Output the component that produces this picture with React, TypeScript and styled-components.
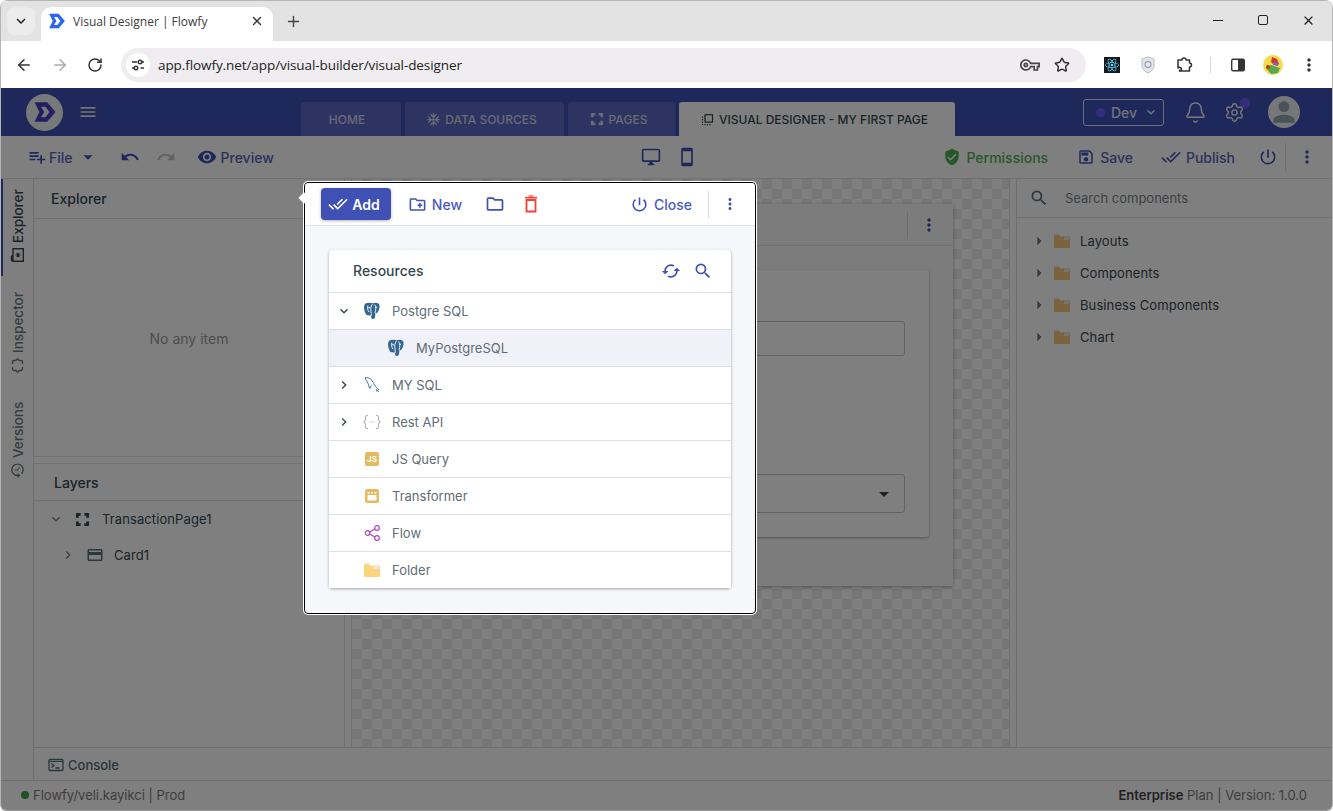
import React from 'react';
import styled, { createGlobalStyle } from 'styled-components';
import {
  MdAcUnit,
  MdAdd,
  MdArrowDropDown,
  MdArrowRight,
  MdCached,
  MdChevronRight,
  MdClose,
  MdCreditCard,
  MdDataObject,
  MdDoneAll,
  MdFlipToFront,
  MdHistory,
  MdKeyboardArrowDown,
  MdMenu,
  MdMoreVert,
  MdOutlineCreateNewFolder,
  MdOutlineDesktopWindows,
  MdOutlineFolder,
  MdOutlineSave,
  MdOutlineSmartphone,
  MdOutlineVpnKey,
  MdPerson,
  MdPlaylistAdd,
  MdPowerSettingsNew,
  MdRedo,
  MdSearch,
  MdUndo,
  MdVerifiedUser,
  MdVisibility,
} from 'react-icons/md';
import { SiReact } from 'react-icons/si';
import { ArrowLeft, ArrowRight, Bell, Plus, RotateCw, Settings, Star, X } from 'lucide-react';

const INDIGO = '#3f51b5';
const SLATE = '#37474f';
const VIOLET = '#6a5cff';

const GlobalStyle = createGlobalStyle`
  html, body { margin: 0; padding: 0; background: #fff; }
  * { box-sizing: border-box; }
  body { font-family: Inter, "Liberation Sans", sans-serif; color: ${SLATE}; }
`;

const Page = styled.div`
  position: relative;
  width: 1333px;
  height: 811px;
  overflow: hidden;
  display: flex;
  flex-direction: column;
  border-left: 1px solid #b5b5b5;
  border-right: 1px solid #b5b5b5;
  border-bottom: 1px solid #9a9a9a;
  border-radius: 8px 8px 6px 6px;
`;

const IconSlot = styled.span<{ $ml?: number; $mr?: number }>`
  display: flex;
  flex: none;
  margin-left: ${(p) => p.$ml ?? 0}px;
  margin-right: ${(p) => p.$mr ?? 0}px;
`;

/* browser chrome */
const TabStrip = styled.div`
  height: 41px;
  flex: none;
  background: #e3e3e3;
  border-top: 1px solid #b5b5b5;
  display: flex;
  align-items: flex-end;
  padding-left: 6px;
`;

const TabSearch = styled.div`
  width: 28px;
  height: 28px;
  margin-bottom: 6px;
  border-radius: 8px;
  background: #ececec;
  color: #222;
  display: flex;
  align-items: center;
  justify-content: center;
`;

const BrowserTab = styled.div`
  width: 232px;
  height: 34px;
  margin-left: 6px;
  background: #fff;
  border-radius: 10px 10px 0 0;
  display: flex;
  align-items: center;
  padding: 0 9px 6px 7px;
  font: 12px "Open Sans", "Noto Sans", sans-serif;
  color: #3c3c3c;
  gap: 7px;
  span { flex: 1; }
`;

const NewTab = styled.div`
  margin: 0 0 11px 12px;
  color: #444;
  display: flex;
`;

const WindowButtons = styled.div`
  margin: 0 0 2px auto;
  align-self: center;
  display: flex;
  gap: 35px;
  padding-right: 16px;
  color: #222;
  align-items: center;
`;

const MinLine = styled.div`
  width: 10px;
  height: 1px;
  background: #222;
`;

const MaxBox = styled.div`
  width: 10px;
  height: 10px;
  border: 1px solid #222;
  border-radius: 2px;
`;

const BrowserBar = styled.div`
  height: 47px;
  flex: none;
  background: #fff;
  display: flex;
  align-items: center;
  padding-left: 14px;
  color: #444;
`;

const NavIcons = styled.div`
  display: flex;
  gap: 18px;
  align-items: center;
  margin-right: 18px;
`;

const Omnibox = styled.div`
  width: 965px;
  height: 34px;
  border-radius: 17px;
  background: #efedef;
  display: flex;
  align-items: center;
  padding: 0 16px 0 5px;
  font: 13.5px "Open Sans", "Noto Sans", sans-serif;
  letter-spacing: -0.08px;
  color: #222;
`;

const SiteInfo = styled.div`
  width: 24px;
  height: 24px;
  border-radius: 12px;
  background: #fff;
  display: flex;
  align-items: center;
  justify-content: center;
  margin-right: 8px;
`;

const OmniIcons = styled.div`
  margin-left: auto;
  display: flex;
  gap: 14px;
  align-items: center;
  color: #444;
`;

const ExtensionIcons = styled.div`
  display: flex;
  align-items: center;
  margin-left: 18px;
`;

const ReactBadge = styled.div`
  width: 16px;
  height: 16px;
  background: #16181d;
  color: #61dafb;
  display: flex;
  align-items: center;
  justify-content: center;
`;

const ToolbarRule = styled.div`
  width: 1px;
  height: 16px;
  background: #d8d8d8;
  margin: 0 19px 0 17px;
`;

/* app header */
const AppNav = styled.div`
  height: 48px;
  flex: none;
  background: ${INDIGO};
  display: flex;
  align-items: flex-end;
  position: relative;
`;

const LogoBlock = styled.div`
  width: 300px;
  height: 48px;
  flex: none;
  display: flex;
  align-items: center;
  padding-left: 25px;
  color: rgba(255, 255, 255, 0.85);
  gap: 15px;
`;

const LogoCircle = styled.div`
  width: 37px;
  height: 37px;
  border-radius: 50%;
  background: #f0f0f0;
  display: flex;
  align-items: center;
  justify-content: center;
`;

const NavTabs = styled.div`
  display: flex;
  gap: 4px;
`;

const NavTab = styled.div<{ $w: number; $active?: boolean; $gap?: number; $pr?: number }>`
  width: ${(p) => p.$w}px;
  height: 34px;
  border-radius: 3px 3px 0 0;
  background: ${(p) => (p.$active ? '#fff' : '#5b69c2')};
  color: ${(p) => (p.$active ? SLATE : 'rgba(255,255,255,0.72)')};
  font-size: 12px;
  font-weight: 500;
  display: flex;
  align-items: center;
  justify-content: center;
  padding-right: ${(p) => p.$pr ?? 0}px;
  gap: ${(p) => p.$gap ?? 4}px;
`;

const NavRight = styled.div`
  position: absolute;
  right: 32px;
  top: 0;
  height: 48px;
  display: flex;
  align-items: center;
  color: #fff;
`;

const EnvButton = styled.div`
  width: 81px;
  height: 27px;
  margin-right: 20px;
  border: 1px solid rgba(255, 255, 255, 0.8);
  border-radius: 3px;
  display: flex;
  align-items: center;
  padding-left: 12px;
  font-size: 14px;
  font-weight: 500;
  color: rgba(255, 255, 255, 0.85);
`;

const EnvDot = styled.span`
  width: 9px;
  height: 9px;
  border-radius: 50%;
  background: ${VIOLET};
  margin-right: 6px;
`;

const GearWrap = styled.div`
  position: relative;
  display: flex;
  margin: 0 23px 0 17px;
`;

const GearBadge = styled.span`
  position: absolute;
  top: -4px;
  right: -5px;
  width: 10px;
  height: 10px;
  border-radius: 50%;
  background: ${VIOLET};
`;

const Avatar = styled.div`
  width: 32px;
  height: 32px;
  border-radius: 50%;
  background: #eceff1;
  overflow: hidden;
  display: flex;
  align-items: center;
  justify-content: center;
  color: #90a4ae;
`;

/* designer toolbar */
const Toolbar = styled.div`
  height: 43px;
  flex: none;
  background: #fff;
  border-bottom: 1px solid #e2e2e2;
  display: grid;
  grid-template-columns: 1fr auto 1fr;
  align-items: center;
  padding: 0 15px 0 26px;
`;

const ToolGroup = styled.div<{ $end?: boolean; $gap?: number; $mr?: number }>`
  display: flex;
  align-items: center;
  justify-content: ${(p) => (p.$end ? 'flex-end' : 'flex-start')};
  gap: ${(p) => p.$gap ?? 0}px;
  margin-right: ${(p) => p.$mr ?? 0}px;
`;

const ToolButton = styled.div<{ $color?: string; $ml?: number; $gap?: number }>`
  display: flex;
  align-items: center;
  gap: ${(p) => p.$gap ?? 4}px;
  font-size: 14px;
  font-weight: 500;
  color: ${(p) => p.$color ?? '#5563bb'};
  margin-left: ${(p) => p.$ml ?? 0}px;
  svg { flex: none; color: ${(p) => p.$color ?? INDIGO}; }
`;

const VRule = styled.div<{ $h: number; $ml?: number }>`
  width: 1px;
  height: ${(p) => p.$h}px;
  margin-left: ${(p) => p.$ml ?? 0}px;
  background: #dcdcdc;
`;

/* workspace */
const Workspace = styled.div`
  flex: 1;
  display: flex;
  min-height: 0;
`;

const Rail = styled.div`
  width: 33px;
  flex: none;
  border-right: 1px solid #dedede;
  background: #fff;
  display: flex;
  flex-direction: column;
`;

const RailTab = styled.div<{ $h: number; $active?: boolean; $color?: string }>`
  height: ${(p) => p.$h}px;
  writing-mode: vertical-rl;
  transform: rotate(180deg);
  display: flex;
  align-items: center;
  justify-content: flex-start;
  gap: 4px;
  padding: 13px 0 0 0;
  font-size: 13.5px;
  font-weight: 500;
  color: ${(p) => p.$color ?? SLATE};
  border-right: 2px solid ${(p) => (p.$active ? INDIGO : 'transparent')};
  svg { transform: rotate(90deg); flex: none; }
`;

const Center = styled.div`
  flex: 1;
  min-width: 0;
  display: flex;
  flex-direction: column;
`;

const CenterTop = styled.div`
  flex: 1;
  min-height: 0;
  display: flex;
`;

const LeftPanel = styled.div`
  width: 311px;
  flex: none;
  border-right: 1px solid #dedede;
  background: #fff;
  display: flex;
  flex-direction: column;
`;

const PanelHead = styled.div<{ $pl: number; $h: number; $ruled?: boolean }>`
  height: ${(p) => p.$h}px;
  flex: none;
  padding: 0 14px 0 ${(p) => p.$pl}px;
  display: flex;
  align-items: center;
  justify-content: space-between;
  font-size: 14px;
  font-weight: 500;
  border-top: ${(p) => (p.$ruled ? '1px solid #e2e2e2' : '0')};
  border-bottom: 1px solid #e2e2e2;
  color: ${SLATE};
`;

const ExplorerBody = styled.div`
  height: 238px;
  flex: none;
  display: flex;
  align-items: center;
  justify-content: center;
  padding-top: 2px;
  font-size: 14px;
  color: #9a9a9a;
  border-bottom: 1px solid #e2e2e2;
  margin-bottom: 6px;
`;

const TreeRow = styled.div<{ $indent: number }>`
  height: 36px;
  display: flex;
  align-items: center;
  gap: 10px;
  padding-left: ${(p) => p.$indent}px;
  font-size: 13px;
  letter-spacing: 0.1px;
  color: ${SLATE};
`;

const Splitter = styled.div`
  width: 6px;
  flex: none;
  background: #fff;
`;

const Canvas = styled.div`
  width: 659px;
  flex: none;
  border-left: 1px solid #dedede;
  border-right: 1px solid #dedede;
  background: repeating-conic-gradient(#eeeeee 0 25%, #ffffff 0 50%) 0 0 / 20px 20px;
  display: flex;
  justify-content: flex-end;
  padding: 25px 56px 0 0;
`;

const PageCard = styled.div`
  width: 578px;
  height: 382px;
  background: #f9f9f9;
  box-shadow: 0 1px 4px rgba(0, 0, 0, 0.3);
  display: flex;
  flex-direction: column;
`;

const PageCardHead = styled.div`
  height: 42px;
  flex: none;
  border-bottom: 1px solid #e2e2e2;
  display: flex;
  align-items: center;
  justify-content: flex-end;
  padding-right: 14px;
  gap: 11px;
  color: ${INDIGO};
`;

const InnerCard = styled.div`
  margin: 24px 24px 0 24px;
  height: 267px;
  background: #fff;
  border-radius: 3px;
  box-shadow: 0 1px 3px rgba(0, 0, 0, 0.35);
  padding: 51px 24px 0;
`;

const Field = styled.div<{ $h: number; $mb: number }>`
  height: ${(p) => p.$h}px;
  margin-bottom: ${(p) => p.$mb}px;
  border: 1px solid #c4c4c4;
  border-radius: 3px;
  display: flex;
  align-items: center;
  justify-content: flex-end;
  padding-right: 8px;
  color: ${SLATE};
`;

const RightPanel = styled.div`
  width: 316px;
  flex: none;
  background: #fff;
  border-left: 1px solid #dedede;
  display: flex;
  flex-direction: column;
`;

const SearchHead = styled.div`
  height: 39px;
  flex: none;
  border-bottom: 1px solid #e2e2e2;
  display: flex;
  align-items: center;
  padding-left: 12px;
  gap: 16px;
  font-size: 13px;
  color: #7b8489;
`;

const ComponentTree = styled.div`
  padding-top: 7px;
`;

const ComponentRow = styled.div`
  height: 32px;
  display: flex;
  align-items: center;
  padding-left: 12px;
  gap: 11px;
  font-size: 13px;
  letter-spacing: 0.1px;
  color: ${SLATE};
`;

const RowCaret = styled.span`
  display: flex;
  color: #607d8b;
  margin-right: -6px;
`;

const FolderLabel = styled.span`
  margin-left: -1px;
`;

const ConsoleBar = styled.div`
  height: 33px;
  flex: none;
  background: #fff;
  border-top: 1px solid #dedede;
  display: flex;
  align-items: center;
  padding: 1px 0 0 14px;
  gap: 4px;
  font-size: 13px;
  font-weight: 500;
  color: #546e7a;
`;

const StatusBar = styled.div`
  height: 30px;
  flex: none;
  background: #fff;
  border-top: 1px solid #dedede;
  display: flex;
  align-items: center;
  justify-content: space-between;
  padding: 0 25px 1px 20px;
  font-size: 13px;
  color: #7b7b7b;
`;

const StatusLeft = styled.div`
  display: flex;
  align-items: center;
`;

const GreenDot = styled.span`
  width: 8px;
  height: 8px;
  border-radius: 50%;
  background: #43a047;
  margin-right: 4px;
`;

const Strong = styled.b`
  font-weight: 600;
  color: #444;
`;

/* dim layer + popover */
const Dim = styled.div`
  position: absolute;
  left: 0;
  right: 0;
  top: 88px;
  bottom: 0;
  background: rgba(0, 0, 0, 0.5);
`;

const Popover = styled.div`
  position: absolute;
  left: 303px;
  top: 182px;
  width: 452px;
  height: 432px;
  background: #f6f7fb;
  border: 1px solid #000;
  border-radius: 4px;
  box-shadow: 0 0 0 1px #fff;
  display: flex;
  flex-direction: column;
  &::before {
    content: '';
    position: absolute;
    left: -5px;
    top: 11px;
    width: 8px;
    height: 8px;
    background: #fff;
    transform: rotate(45deg);
  }
`;

const PopHead = styled.div`
  height: 43px;
  flex: none;
  background: #fff;
  border-bottom: 1px solid #e4e4e4;
  border-radius: 4px 4px 0 0;
  display: flex;
  align-items: center;
  padding: 0 16px;
  color: ${INDIGO};
  font-size: 14px;
  font-weight: 500;
`;

const AddButton = styled.div`
  width: 72px;
  height: 32px;
  border-radius: 4px;
  padding-right: 4px;
  background: ${INDIGO};
  color: #fff;
  font-weight: 600;
  display: flex;
  align-items: center;
  justify-content: center;
  gap: 4px;
  box-shadow: 0 1px 3px rgba(0, 0, 0, 0.3);
`;

const PopAction = styled.div<{ $ml: number; $gap?: number }>`
  display: flex;
  align-items: center;
  gap: ${(p) => p.$gap ?? 4}px;
  margin-left: ${(p) => p.$ml}px;
  color: #4a5bc0;
`;

const ResourceCard = styled.div`
  margin: 24px 24px 0 24px;
  background: #fff;
  border-radius: 4px;
  box-shadow: 0 1px 3px rgba(0, 0, 0, 0.35);
`;

const ResourceHead = styled.div`
  height: 42px;
  display: flex;
  align-items: center;
  padding: 0 18px 1px 24px;
  font-size: 14px;
  font-weight: 500;
  color: ${SLATE};
  gap: 12px;
  span { flex: 1; }
  svg { color: ${INDIGO}; }
`;

const ResourceRow = styled.div<{ $selected?: boolean; $child?: boolean }>`
  height: 37px;
  border-top: 1px solid #e0e0e0;
  background: ${(p) => (p.$selected ? '#f0f1f9' : '#fff')};
  display: flex;
  align-items: center;
  padding-left: ${(p) => (p.$child ? 58 : 7)}px;
  font-size: 13px;
  color: #616c75;
`;

const Caret = styled.div`
  width: 16px;
  height: 16px;
  margin-right: 11px;
  color: ${SLATE};
  display: flex;
`;

const RowIcon = styled.div`
  width: 18px;
  height: 18px;
  margin-right: 11px;
  display: flex;
  align-items: center;
  justify-content: center;
`;

const JsBadge = styled.div`
  width: 14px;
  height: 14px;
  border-radius: 2px;
  background: #e5b95c;
  color: #fff;
  font-size: 8px;
  font-weight: 700;
  display: flex;
  align-items: center;
  justify-content: center;
`;

const FlowfyMark = ({ size, color }: { size: number; color: string }) => (
  <svg width={size} height={size} viewBox="0 0 16 16">
    <path
      fill={color}
      fillRule="evenodd"
      d="M1 1.500h8.500L15 8l-5.500 6.500H1L4.200 8zM5.400 4.500h2.900L11 8l-2.700 3.500H5.400L7.500 8z"
    />
  </svg>
);

const PagesIcon = ({ size, color }: { size: number; color: string }) => (
  <svg width={size} height={size} viewBox="0 0 16 16" fill={color}>
    <path d="M2 1h4v3H4v2H1V2a1 1 0 0 1 1-1zM10 1h4a1 1 0 0 1 1 1v4h-3V4h-2zM1 10h3v2h2v3H2a1 1 0 0 1-1-1zM12 10h3v4a1 1 0 0 1-1 1h-4v-3h2z" />
  </svg>
);

const SiteInfoIcon = () => (
  <svg width="14" height="14" viewBox="0 0 14 14" fill="none" stroke="#333" strokeWidth="1.400">
    <path d="M1 4h5M9.500 10H13" />
    <circle cx="9" cy="4" r="1.800" />
    <circle cx="5" cy="10" r="1.800" />
    <path d="M11 4h2M1 10h2" />
  </svg>
);

const GuardIcon = () => (
  <svg width="16" height="18" viewBox="0 0 16 18">
    <path d="M8 1l6 2v6c0 4-3 6.500-6 8-3-1.500-6-4-6-8V3z" fill="#e4e6ea" stroke="#b4bac6" />
    <circle cx="8" cy="8.500" r="3" fill="none" stroke="#a0a8b8" strokeWidth="1.300" />
  </svg>
);

const PuzzleIcon = () => (
  <svg width="17" height="17" viewBox="0 0 17 17" fill="none" stroke="#333" strokeWidth="1.500" strokeLinejoin="round">
    <path d="M2 4h4a2 2 0 0 1 4 0h3.500v3a2 2 0 0 1 0 4v4H3.500a1.500 1.500 0 0 1 0-.5l2-1a2 2 0 0 0-3.500-1.500z" />
  </svg>
);

const SidePanelIcon = () => (
  <svg width="16" height="16" viewBox="0 0 16 16">
    <rect x="1.700" y="2.200" width="12.600" height="11.600" rx="1.500" fill="none" stroke="#333" strokeWidth="1.400" />
    <rect x="8" y="2.500" width="6" height="11" fill="#333" />
  </svg>
);

const ProfileIcon = () => (
  <svg width="20" height="20" viewBox="0 0 20 20">
    <circle cx="10" cy="10" r="10" fill="#f4dd4a" />
    <path d="M9 2l5 2 2 5-5 1-3-3z" fill="#d8352a" />
    <path d="M10 7l6 1-1 3-5-1z" fill="#8a5ac8" />
    <path d="M3 13l5-3 9 3-2 5-7 1z" fill="#5aa84c" />
    <circle cx="5" cy="12" r="2" fill="#c8322c" />
  </svg>
);

const ExplorerIcon = () => (
  <svg width="16" height="16" viewBox="0 0 16 16" fill="none" stroke={SLATE} strokeWidth="1.400">
    <path d="M1.700 3h12.600v10.300H1.700zM1.700 3l1-1.500h4L8 3" />
    <path d="M8 5.500v5M5.800 6.700l4.400 2.600M10.200 6.700l-4.400 2.600" strokeWidth="1.100" />
  </svg>
);

const ConsoleIcon = () => (
  <svg width="16" height="16" viewBox="0 0 16 16" fill="none" stroke="#546e7a" strokeWidth="1.300">
    <rect x="1" y="2.500" width="14" height="11" rx="1" />
    <path d="M1 4.500h14" strokeWidth="1" />
    <path d="M3.500 6.500L6 8.500l-2.500 2M7.500 11h4" />
  </svg>
);

const PostgresIcon = () => (
  <svg width="18" height="18" viewBox="0 0 16 16">
    <path
      fill="#336791"
      d="M2.500 1.200c2.700-1 5-.7 6 0 2.200-.8 4.200-.7 5.400.3 1.700 1.400.4 5.900-.9 7.700-.6.900-1.500 1-2 .4-.1 2 .1 5.600-2.100 5.600-1.700 0-1.800-1.600-1.800-3.400-1 .5-2.100.3-2.500-.2-1 .3-1.900-.2-2.300-1.400C1 8 0 2.700 2.500 1.200z"
    />
    <path
      fill="none"
      stroke="#fff"
      strokeWidth="0.800"
      strokeLinecap="round"
      d="M8.300 1.800C7 3.500 6.500 6 7.100 9c.2 1 .3 2 .2 3M10.600 2.600c1 1.500 1 4.500.2 6.800M4.200 3.600c-.5 1.500 0 3.500.8 5"
    />
    <circle cx="5.400" cy="5" r="0.700" fill="#fff" />
    <circle cx="11.800" cy="4.700" r="0.600" fill="#fff" />
  </svg>
);

const MysqlIcon = () => (
  <svg width="18" height="18" viewBox="0 0 18 18" fill="none" stroke="#2d6f86" strokeWidth="0.900">
    <path d="M2 1.800c2.500-.6 5 .2 7 2.700 1.500 2 2 4.200 3.500 6 1 1.200 2.300 2 3.500 3.500" />
    <path d="M2 1.800c.8 2.200 2.200 3.300 3 5.500.6 1.800.8 3.400 1.800 5.200" />
    <path d="M6.800 12.500c.8-2.200 1.600-3.300 2-3.500M12.800 13.200l3.400 2.800M13.500 15.500l.5-1.700" />
  </svg>
);

const RestIcon = () => (
  <svg width="18" height="16" viewBox="0 0 18 16" fill="none" stroke="#b3b3b3" strokeWidth="1.100">
    <path d="M5 1.500H4a1.500 1.500 0 0 0-1.500 1.500v3L1 8l1.500 2v3A1.500 1.500 0 0 0 4 14.500h1M13 1.500h1A1.500 1.500 0 0 1 15.500 3v3L17 8l-1.500 2v3a1.500 1.500 0 0 1-1.500 1.500h-1" />
    <path d="M6.500 8h1M8.500 8h1M10.500 8h1" />
  </svg>
);

const TransformerIcon = () => (
  <svg width="14" height="14" viewBox="0 0 14 14">
    <rect width="14" height="14" rx="2.500" fill="#e5b95c" />
    <rect x="2.500" y="6" width="9" height="5.500" fill="#fff" />
    <rect x="2.500" y="3" width="2" height="1.600" fill="#fff" />
    <rect x="6" y="3" width="2" height="1.600" fill="#fff" />
    <rect x="9.500" y="3" width="2" height="1.600" fill="#fff" />
  </svg>
);

const FlowIcon = () => (
  <svg width="17" height="16" viewBox="0 0 17 16" fill="none" stroke="#ab47bc" strokeWidth="1.200">
    <circle cx="3.500" cy="8" r="2.300" />
    <circle cx="13" cy="3" r="2.300" />
    <circle cx="13" cy="13" r="2.300" />
    <path d="M5.500 7l5.500-3M5.500 9l5.500 3" />
  </svg>
);

const LightFolder = ({ dark }: { dark?: boolean }) => (
  <svg width="16" height="14" viewBox="0 0 16 14">
    <path
      d="M0 2a1 1 0 0 1 1-1h4l1.500 1.500H15a1 1 0 0 1 1 1V13a1 1 0 0 1-1 1H1a1 1 0 0 1-1-1z"
      fill={dark ? '#f2c779' : '#fdd57f'}
    />
    <rect x="10" y="3" width="5" height="3" fill="#e8e8ee" />
    <rect x="1" y="0" width="4" height="1.500" fill="#f1e6cf" />
  </svg>
);

const TrashIcon = () => (
  <svg width="16" height="18" viewBox="0 0 16 18" fill="none" stroke="#f44336" strokeWidth="1.800">
    <path d="M3.500 5h9v11.500h-9z" />
    <path d="M2 2.700h12" strokeWidth="1.600" />
    <path d="M5.500 1h5" strokeWidth="1.200" />
  </svg>
);

const App: React.FC = () => {
  return (
    <Page>
      <GlobalStyle />
      <TabStrip>
        <TabSearch>
          <MdKeyboardArrowDown size={18} />
        </TabSearch>
        <BrowserTab>
          <FlowfyMark size={18} color="#2b66f0" />
          <span>Visual Designer | Flowfy</span>
          <X size={14} color="#333" strokeWidth={2.4} />
        </BrowserTab>
        <NewTab>
          <Plus size={17} strokeWidth={2} />
        </NewTab>
        <WindowButtons>
          <MinLine />
          <MaxBox />
          <IconSlot $ml={-2}>
            <MdClose size={15} />
          </IconSlot>
        </WindowButtons>
      </TabStrip>
      <BrowserBar>
        <NavIcons>
          <ArrowLeft size={18} color="#333" />
          <ArrowRight size={18} color="#aaa" />
          <RotateCw size={16} color="#333" strokeWidth={2.2} />
        </NavIcons>
        <Omnibox>
          <SiteInfo>
            <SiteInfoIcon />
          </SiteInfo>
          app.flowfy.net/app/visual-builder/visual-designer
          <OmniIcons>
            <MdOutlineVpnKey size={20} />
            <Star size={16} strokeWidth={2.2} color="#333" />
          </OmniIcons>
        </Omnibox>
        <ExtensionIcons>
          <ReactBadge>
            <SiReact size={14} />
          </ReactBadge>
          <IconSlot $ml={20}>
            <GuardIcon />
          </IconSlot>
          <IconSlot $ml={20}>
            <PuzzleIcon />
          </IconSlot>
          <ToolbarRule />
          <SidePanelIcon />
          <IconSlot $ml={17}>
            <ProfileIcon />
          </IconSlot>
          <IconSlot $ml={16}>
            <MdMoreVert size={20} color="#333" />
          </IconSlot>
        </ExtensionIcons>
      </BrowserBar>

      <AppNav>
        <LogoBlock>
          <LogoCircle>
            <FlowfyMark size={24} color="#4a3cc8" />
          </LogoCircle>
          <MdMenu size={20} />
        </LogoBlock>
        <NavTabs>
          <NavTab $w={100} $pr={8}>
            HOME
          </NavTab>
          <NavTab $w={159} $pr={6}>
            <MdAcUnit size={15} /> DATA SOURCES
          </NavTab>
          <NavTab $w={107} $gap={5} $pr={6}>
            <PagesIcon size={14} color="rgba(255,255,255,0.72)" /> PAGES
          </NavTab>
          <NavTab $w={276} $active $pr={6}>
            <MdFlipToFront size={15} /> VISUAL DESIGNER - MY FIRST PAGE
          </NavTab>
        </NavTabs>
        <NavRight>
          <EnvButton>
            <EnvDot />
            Dev
            <IconSlot $ml={6}>
              <MdKeyboardArrowDown size={16} />
            </IconSlot>
          </EnvButton>
          <Bell size={23} strokeWidth={1.5} color="#f2f2f2" />
          <GearWrap>
            <Settings size={21} strokeWidth={1.6} color="#f2f2f2" />
            <GearBadge />
          </GearWrap>
          <Avatar>
            <MdPerson size={38} />
          </Avatar>
        </NavRight>
      </AppNav>

      <Toolbar>
        <ToolGroup>
          <ToolButton $gap={2}>
            <MdPlaylistAdd size={20} />
            File
          </ToolButton>
          <IconSlot $ml={4}>
            <MdArrowDropDown size={22} color={INDIGO} />
          </IconSlot>
          <IconSlot $ml={21}>
            <MdUndo size={20} color={INDIGO} />
          </IconSlot>
          <IconSlot $ml={16}>
            <MdRedo size={20} color="#c4c4c4" />
          </IconSlot>
          <ToolButton $ml={21}>
            <MdVisibility size={20} />
            Preview
          </ToolButton>
        </ToolGroup>
        <ToolGroup $gap={16} $mr={6}>
          <MdOutlineDesktopWindows size={20} color={INDIGO} />
          <MdOutlineSmartphone size={20} color={INDIGO} />
        </ToolGroup>
        <ToolGroup $end>
          <ToolButton $color="#4caf50" $gap={5}>
            <MdVerifiedUser size={18} color="#4caf50" />
            Permissions
          </ToolButton>
          <ToolButton $ml={29} $gap={5}>
            <MdOutlineSave size={18} />
            Save
          </ToolButton>
          <ToolButton $ml={28} $gap={5}>
            <MdDoneAll size={20} />
            Publish
          </ToolButton>
          <IconSlot $ml={23}>
            <MdPowerSettingsNew size={20} color={INDIGO} />
          </IconSlot>
          <VRule $h={28} $ml={7} />
          <IconSlot $ml={11}>
            <MdMoreVert size={20} color={INDIGO} />
          </IconSlot>
        </ToolGroup>
      </Toolbar>

      <Workspace>
        <Rail>
          <RailTab $h={97} $active>
            <ExplorerIcon />
            Explorer
          </RailTab>
          <RailTab $h={111} $color="#6b7a82">
            <MdDataObject size={17} />
            Inspector
          </RailTab>
          <RailTab $h={105} $color="#6b7a82">
            <MdHistory size={17} />
            Versions
          </RailTab>
        </Rail>
        <Center>
          <CenterTop>
            <LeftPanel>
              <PanelHead $pl={17} $h={40}>
                Explorer
                <MdAdd size={22} color={INDIGO} />
              </PanelHead>
              <ExplorerBody>No any item</ExplorerBody>
              <PanelHead $pl={20} $h={38} $ruled>
                Layers
              </PanelHead>
              <TreeRow $indent={14}>
                <MdKeyboardArrowDown size={16} color="#78868d" />
                <IconSlot $ml={1} $mr={2}>
                  <PagesIcon size={15} color={SLATE} />
                </IconSlot>
                TransactionPage1
              </TreeRow>
              <TreeRow $indent={26}>
                <MdChevronRight size={16} color="#78868d" />
                <MdCreditCard size={18} color="#546e7a" />
                Card1
              </TreeRow>
            </LeftPanel>
            <Splitter />
            <Canvas>
              <PageCard>
                <PageCardHead>
                  <VRule $h={28} />
                  <MdMoreVert size={20} color={INDIGO} />
                </PageCardHead>
                <InnerCard>
                  <Field $h={35} $mb={118} />
                  <Field $h={39} $mb={0}>
                    <MdArrowDropDown size={24} />
                  </Field>
                </InnerCard>
              </PageCard>
            </Canvas>
            <Splitter />
            <RightPanel>
              <SearchHead>
                <MdSearch size={20} color="#546e7a" />
                Search components
              </SearchHead>
              <ComponentTree>
                {['Layouts', 'Components', 'Business Components', 'Chart'].map((label) => (
                  <ComponentRow key={label}>
                    <RowCaret>
                      <MdArrowRight size={20} />
                    </RowCaret>
                    <LightFolder dark />
                    <FolderLabel>{label}</FolderLabel>
                  </ComponentRow>
                ))}
              </ComponentTree>
            </RightPanel>
          </CenterTop>
          <ConsoleBar>
            <ConsoleIcon />
            Console
          </ConsoleBar>
        </Center>
      </Workspace>
      <StatusBar>
        <StatusLeft>
          <GreenDot />
          Flowfy/veli.kayikci&nbsp;|&nbsp;Prod
        </StatusLeft>
        <div>
          <Strong>Enterprise</Strong> Plan | Version: 1.0.0
        </div>
      </StatusBar>

      <Dim />

      <Popover>
        <PopHead>
          <AddButton>
            <MdDoneAll size={20} />
            Add
          </AddButton>
          <PopAction $ml={17} $gap={5}>
            <MdOutlineCreateNewFolder size={19} color={INDIGO} />
            New
          </PopAction>
          <PopAction $ml={23}>
            <MdOutlineFolder size={20} color={INDIGO} />
          </PopAction>
          <PopAction $ml={18}>
            <TrashIcon />
          </PopAction>
          <PopAction $ml={91} $gap={5}>
            <MdPowerSettingsNew size={19} color={INDIGO} />
            Close
          </PopAction>
          <VRule $h={27} $ml={16} />
          <IconSlot $ml={12}>
            <MdMoreVert size={18} color={INDIGO} />
          </IconSlot>
        </PopHead>
        <ResourceCard>
          <ResourceHead>
            <span>Resources</span>
            <MdCached size={20} />
            <MdSearch size={20} />
          </ResourceHead>
          <ResourceRow>
            <Caret>
              <MdKeyboardArrowDown size={16} />
            </Caret>
            <RowIcon>
              <PostgresIcon />
            </RowIcon>
            Postgre SQL
          </ResourceRow>
          <ResourceRow $selected $child>
            <RowIcon>
              <PostgresIcon />
            </RowIcon>
            MyPostgreSQL
          </ResourceRow>
          <ResourceRow>
            <Caret>
              <MdChevronRight size={16} />
            </Caret>
            <RowIcon>
              <MysqlIcon />
            </RowIcon>
            MY SQL
          </ResourceRow>
          <ResourceRow>
            <Caret>
              <MdChevronRight size={16} />
            </Caret>
            <RowIcon>
              <RestIcon />
            </RowIcon>
            Rest API
          </ResourceRow>
          <ResourceRow>
            <Caret />
            <RowIcon>
              <JsBadge>JS</JsBadge>
            </RowIcon>
            JS Query
          </ResourceRow>
          <ResourceRow>
            <Caret />
            <RowIcon>
              <TransformerIcon />
            </RowIcon>
            Transformer
          </ResourceRow>
          <ResourceRow>
            <Caret />
            <RowIcon>
              <FlowIcon />
            </RowIcon>
            Flow
          </ResourceRow>
          <ResourceRow>
            <Caret />
            <RowIcon>
              <LightFolder />
            </RowIcon>
            Folder
          </ResourceRow>
        </ResourceCard>
      </Popover>
    </Page>
  );
};

export default App;
